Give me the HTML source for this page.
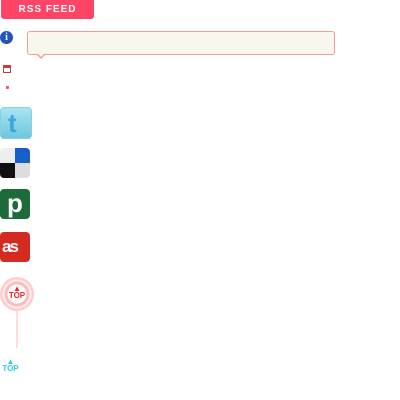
<!DOCTYPE html><html><head><style>
body{margin:0;width:400px;height:400px;background:#fff;position:relative;font-family:"Liberation Sans",sans-serif;overflow:hidden}
.a{position:absolute}
.ic{position:absolute;left:0;width:30px;height:30px;border-radius:4px;overflow:hidden}
</style></head><body>
<div class="a" style="left:1px;top:0;width:93px;height:19px;background:#ff4466;border-radius:0 0 3px 3px;color:#fff;font-size:10px;font-weight:bold;letter-spacing:1px;text-align:center;line-height:19px">RSS FEED</div>
<div class="a" style="left:0;top:31px;width:13px;height:13px;border-radius:50%;background:#2255bb;color:#fff;font-size:10px;font-weight:bold;text-align:center;line-height:13px;font-family:'Liberation Serif',serif">i</div>
<div class="a" style="left:27px;top:31px;width:306px;height:22px;border:1px solid #f59a9a;border-radius:3px;background:#f8f7ee"></div>
<div class="a" style="left:36px;top:54px;width:0;height:0;border-left:5px solid transparent;border-right:5px solid transparent;border-top:5px solid #f59a9a"></div>
<div class="a" style="left:37px;top:53px;width:0;height:0;border-left:4px solid transparent;border-right:4px solid transparent;border-top:4px solid #f8f7ee"></div>
<div class="a" style="left:3px;top:65px;width:8px;height:8px;border:1px solid #b44;border-top:3px solid #d33;background:#fff;box-sizing:border-box"></div>
<div class="a" style="left:6px;top:86px;width:3px;height:3px;background:#f46;border-radius:1px"></div>
<div class="ic" style="top:107px;background:linear-gradient(#a8e4f0,#6cc8e0);border:1px solid #8cd"><div class="a" style="left:7px;top:3px;color:#3aa7dd;font-size:26px;font-weight:bold;line-height:24px">t</div></div>
<div class="ic" style="top:148px">
<div class="a" style="left:0;top:0;width:15px;height:15px;background:#eee"></div>
<div class="a" style="left:15px;top:0;width:15px;height:15px;background:#1560c8"></div>
<div class="a" style="left:0;top:15px;width:15px;height:15px;background:#111"></div>
<div class="a" style="left:15px;top:15px;width:15px;height:15px;background:#ddd"></div></div>
<div class="ic" style="top:189px;background:#1e6b3a"><div class="a" style="left:7px;top:1px;color:#fff;font-size:26px;font-weight:bold;line-height:26px">p</div></div>
<div class="ic" style="top:232px;background:#d42a20"><div class="a" style="left:2px;top:5px;color:#fff;font-size:17px;font-weight:bold;letter-spacing:-2px;line-height:20px">as</div></div>
<div class="a" style="left:0;top:277px;width:34px;height:34px;border-radius:50%;background:radial-gradient(circle,#fff 0 9px,#fbb 10px 12px,#fee 13px 14px,#fcc 15px 17px)"></div>
<div class="a" style="left:0;top:285px;width:34px;text-align:center;color:#e22;font-size:8px;font-weight:bold;line-height:7px">▲<br>TOP</div>
<div class="a" style="left:16px;top:311px;width:2px;height:37px;background:#fdd"></div>
<div class="a" style="left:0;top:358px;width:21px;text-align:center;color:#3cd;font-size:8px;font-weight:bold;line-height:7px">▲<br>TOP</div>
</body></html>
